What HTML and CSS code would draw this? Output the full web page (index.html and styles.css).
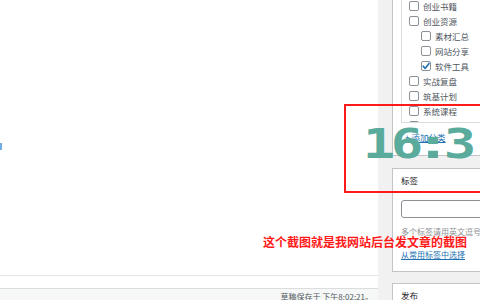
FILE: index.html
```html
<!DOCTYPE html>
<html lang="zh-CN">
<head>
<meta charset="utf-8">
<link rel="stylesheet" href="styles.css">
</head>
<body>
<div class="page">
  <div class="main">
    <div class="editor"></div>
    <div class="strip"></div>
    <div class="status">草稿保存于 下午8:02:21。</div>
  </div>
  <div class="gutter"></div>
  <div class="sidebar">
    <div class="postbox cat">
      <div class="checklist">
        <label class="row"><span class="cb"></span>创业书籍</label>
        <label class="row"><span class="cb"></span>创业资源</label>
        <label class="row child"><span class="cb"></span>素材汇总</label>
        <label class="row child"><span class="cb"></span>网站分享</label>
        <label class="row child"><span class="cb checked"><svg viewBox="0 0 10 10" width="10" height="10"><path d="M2.2 5.2 L4.2 7.4 L8 2.4" fill="none" stroke="#2271b1" stroke-width="1.6" stroke-linecap="round" stroke-linejoin="round"/></svg></span>软件工具</label>
        <label class="row"><span class="cb"></span>实战复盘</label>
        <label class="row"><span class="cb"></span>筑基计划</label>
        <label class="row"><span class="cb"></span>系统课程</label>
        <label class="row"><span class="cb"></span>运营干货</label>
      </div>
      <a class="addlink">+ 添加分类</a>
    </div>
    <div class="postbox tags">
      <div class="hd">标签</div>
      <div class="bd">
        <div class="input"></div>
        <div class="hint">多个标签请用英文逗号（,）分开</div>
        <a class="link">从常用标签中选择</a>
      </div>
    </div>
    <div class="postbox pub">
      <div class="hd">发布</div>
    </div>
  </div>
</div>
<div class="mark"></div>
<div class="redbox"></div>
<div class="clock"><span class="d"><span>1</span></span><span class="d"><span>6</span></span><span class="d colon"><span>:</span></span><span class="d"><span>3</span></span></div>
<div class="note">这个截图就是我网站后台发文章的截图</div>
</body>
</html>
```

FILE: styles.css
```css
html, body {
  margin: 0;
  padding: 0;
  width: 480px;
  height: 300px;
  overflow: hidden;
  background: #ffffff;
  font-family: "Noto Sans CJK SC", "Liberation Sans", sans-serif;
}
.page {
  display: flex;
  width: 480px;
  height: 300px;
  overflow: hidden;
}
.main {
  flex: none;
  width: 378px;
  display: flex;
  flex-direction: column;
  background: #fff;
}
.editor {
  height: 275px;
  border-bottom: 1px solid #e6e6e6;
  flex: none;
}
.strip {
  height: 12px;
  flex: none;
}
.status {
  flex: 1;
  border-top: 1px solid #dcdcde;
  background: #f6f7f7;
  font-size: 8px;
  line-height: 12px;
  color: #50575e;
  text-align: right;
  padding: 2px 5px 0 0;
}
.gutter {
  flex: none;
  width: 14px;
  background: #f1f1f1;
}
.sidebar {
  flex: none;
  width: 150px;
  background: #f1f1f1;
}
.postbox {
  background: #fff;
  border: 1px solid #c3c4c7;
}
.cat {
  margin-top: -20px;
  padding: 8px 8px 12px;
}
.checklist {
  box-sizing: border-box;
  height: 134px;
  border: 1px solid #dcdcde;
  padding: 8px 0 0 7px;
  overflow: hidden;
}
.row {
  display: flex;
  align-items: center;
  height: 15px;
  font-size: 8.5px;
  color: #50575e;
  white-space: nowrap;
}
.row.child {
  padding-left: 12px;
}
.cb {
  box-sizing: border-box;
  width: 10px;
  height: 10px;
  border: 1px solid #8c8f94;
  border-radius: 2px;
  background: #fff;
  margin-right: 4px;
  flex: none;
  position: relative;
}
.cb svg {
  position: absolute;
  left: -1px;
  top: -1px;
}
.addlink {
  display: block;
  margin: 8px 0 0 4px;
  font-size: 8.5px;
  line-height: 12px;
  color: #2271b1;
  text-decoration: underline;
}
.tags {
  margin-top: 12px;
}
.hd {
  height: 22px;
  line-height: 22px;
  padding-left: 8px;
  font-size: 8.5px;
  color: #1d2327;
  border-bottom: 1px solid #dcdcde;
}
.bd {
  padding: 8px 0 10px 8px;
}
.input {
  height: 18px;
  box-sizing: border-box;
  border: 1px solid #8c8f94;
  border-radius: 3px;
  background: #fff;
}
.hint {
  margin-top: 8px;
  font-size: 8px;
  line-height: 12px;
  color: #8c8f94;
  white-space: nowrap;
}
.link {
  display: block;
  margin-top: 11px;
  font-size: 8px;
  line-height: 12px;
  color: #2271b1;
  text-decoration: underline;
  white-space: nowrap;
}
.pub {
  margin-top: 11px;
}
.pub .hd {
  border-bottom: none;
}
.mark {
  position: absolute;
  left: 0;
  top: 143px;
  width: 2px;
  height: 7px;
  background: #72aee6;
}
.redbox {
  position: absolute;
  left: 344px;
  top: 104px;
  width: 200px;
  height: 85px;
  border: 2px solid #ff1a1a;
}
.clock {
  position: absolute;
  left: 365px;
  top: 124px;
  display: flex;
  font-family: "DejaVu Sans Mono", "Liberation Mono", monospace;
  font-weight: bold;
  font-size: 40px;
  line-height: 40px;
  color: #5aab9b;
  white-space: nowrap;
}
.clock .d {
  flex: none;
  width: 28px;
  display: flex;
  justify-content: center;
}
.clock .d span {
  display: inline-block;
  transform: scaleX(1.35);
}
.clock .colon {
  width: 25px;
}
.clock .colon span {
  transform: scaleX(1.5);
}
.note {
  position: absolute;
  left: 263px;
  top: 235px;
  font-size: 12px;
  line-height: 14px;
  font-weight: bold;
  color: #ff1a1a;
  white-space: nowrap;
}
```
